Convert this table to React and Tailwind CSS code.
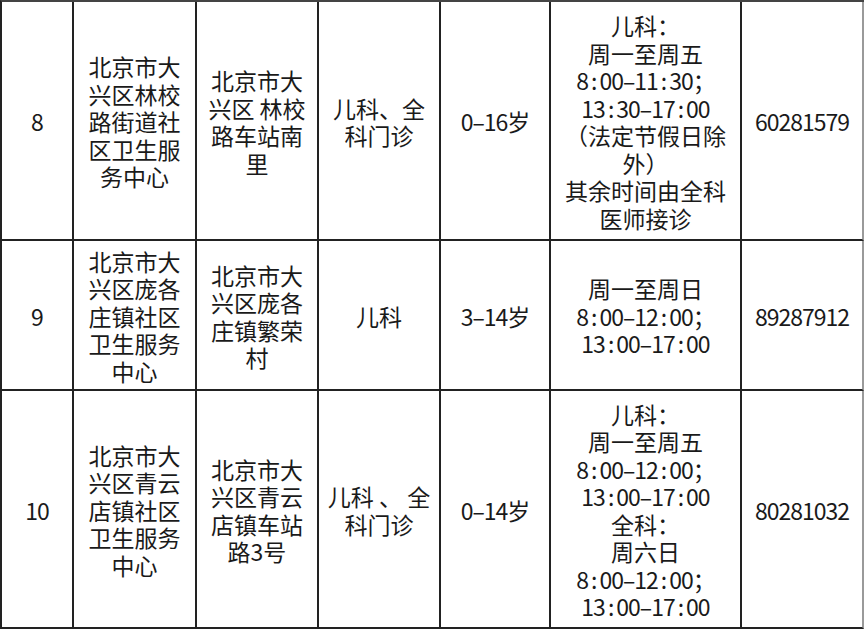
import React from "react";

const rows = [
  {
    no: "8",
    name: ["北京市大", "兴区林校", "路街道社", "区卫生服", "务中心"],
    addr: ["北京市大", "兴区 林校", "路车站南", "里"],
    dept: ["儿科、全", "科门诊"],
    age: "0–16岁",
    time: [
      "儿科：",
      "周一至周五",
      "8:00–11:30；",
      "13:30–17:00",
      "（法定节假日除",
      "外）",
      "其余时间由全科",
      "医师接诊",
    ],
    tel: "60281579",
  },
  {
    no: "9",
    name: ["北京市大", "兴区庞各", "庄镇社区", "卫生服务", "中心"],
    addr: ["北京市大", "兴区庞各", "庄镇繁荣", "村"],
    dept: ["儿科"],
    age: "3–14岁",
    time: ["周一至周日", "8:00–12:00；", "13:00–17:00"],
    tel: "89287912",
  },
  {
    no: "10",
    name: ["北京市大", "兴区青云", "店镇社区", "卫生服务", "中心"],
    addr: ["北京市大", "兴区青云", "店镇车站", "路3号"],
    dept: ["儿科 、 全", "科门诊"],
    age: "0–14岁",
    time: [
      "儿科：",
      "周一至周五",
      "8:00–12:00；",
      "13:00–17:00",
      "全科：",
      "周六日",
      "8:00–12:00；",
      "13:00–17:00",
    ],
    tel: "80281032",
  },
];

// the source font has narrower digits and a wider colon
const Line = ({ text }) => {
  const parts = text.split(":");
  const numeric = /^[0-9]/.test(text);
  return (
    <div className={numeric ? "whitespace-pre tracking-[-1px]" : "whitespace-pre"}>
      {parts.map((p, i) => (
        <span key={i}>
          {i > 0 && <span className="mx-[3px]">:</span>}
          {p}
        </span>
      ))}
    </div>
  );
};

const Cell = ({ lines, last }) => (
  <div
    className={
      "flex flex-col items-center justify-center text-center border-b-2 border-r-2 border-b-[#222] pt-[3px] " +
      (last ? "border-r-[#9a9a9a]" : "border-r-[#222]")
    }
  >
    {lines.map((l, i) => (
      <Line key={i} text={l} />
    ))}
  </div>
);

export default function App() {
  return (
    <div className="w-[864px] h-[630px] bg-white overflow-hidden">
      <div
        className="grid grid-cols-[72px_123px_122px_122px_110px_191px_122px] grid-rows-[239px_150px_238px] border-l-2 border-t-2 border-l-[#222] border-t-[#444] text-[23px] leading-[27.5px] text-[#1a1a1a]"
        style={{ fontFamily: '"Noto Sans CJK SC", "Noto Sans", sans-serif' }}
      >
        {rows.map((r) => (
          <React.Fragment key={r.no}>
            <Cell lines={[r.no]} />
            <Cell lines={r.name} />
            <Cell lines={r.addr} />
            <Cell lines={r.dept} />
            <Cell lines={[r.age]} />
            <Cell lines={r.time} />
            <Cell lines={[r.tel]} last />
          </React.Fragment>
        ))}
      </div>
    </div>
  );
}
